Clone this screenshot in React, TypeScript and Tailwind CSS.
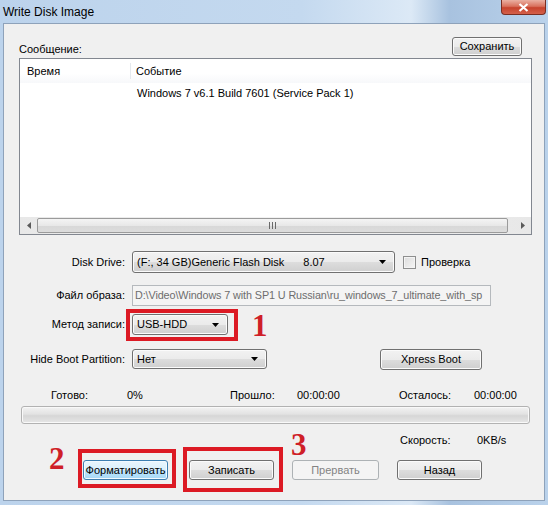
import type { ReactNode } from "react";

const face =
  "rounded-[3px] border border-[#707070] bg-[linear-gradient(#f2f2f2_0%,#ebebeb_50%,#dddddd_51%,#cfcfcf_100%)] shadow-[inset_0_0_0_1px_#fbfbfb] text-black";
const btn = `flex items-center justify-center ${face}`;

const Arrow = () => (
  <svg width="7" height="4" viewBox="0 0 7 4" className="shrink-0">
    <path d="M0 0h7L3.5 4z" fill="#000" />
  </svg>
);

const Combo = ({ children, className }: { children: ReactNode; className: string }) => (
  <div className={`flex items-center justify-between pl-[4px] pr-[8px] ${face} ${className}`}>
    <span className="flex whitespace-nowrap">{children}</span>
    <Arrow />
  </div>
);

const Label = ({ children }: { children: ReactNode }) => (
  <div className="w-[106px] shrink-0 text-right">{children}</div>
);

const RedBox = ({ className }: { className: string }) => (
  <div className={`absolute border-[4px] border-[#dc1a24] ${className}`} />
);

const Mark = ({ n, className }: { n: string; className: string }) => (
  <div
    className={`absolute font-['Liberation_Serif',serif] text-[31px] leading-none font-bold text-[#cf1f28] ${className}`}
  >
    {n}
  </div>
);

export default function App() {
  return (
    <div className="relative flex h-[505px] w-[548px] flex-col overflow-hidden bg-[linear-gradient(90deg,#bcd3ec,#c4d9ef_55%,#dce9f6_75%,#a8c2df_82%,#bad2eb_100%)] font-['Liberation_Sans',Arial,sans-serif] text-[11px] text-black">
      {/* title bar */}
      <div className="flex h-[23px] shrink-0 justify-between">
        <div className="self-center pl-[3px] pt-[1px] text-[12px] text-black">
          Write Disk Image
        </div>
        <div className="mr-[2px] flex h-[15px] w-[45px] items-center justify-center rounded-b-[4px] border border-t-0 border-[#7a2e22] bg-[linear-gradient(#eab0a2_0%,#d9715d_45%,#c7432d_55%,#d4604a_100%)]">
          <svg width="11" height="9" viewBox="0 0 11 9">
            <path d="M1.5 1l8 7M9.5 1l-8 7" stroke="#fff" strokeWidth="2.2" />
          </svg>
        </div>
      </div>

      {/* client area */}
      <div className="mx-[3px] mb-[4px] flex flex-1 flex-col border border-[#8ea2ba] bg-[#f0f0f0] pl-[15px] pr-[12px]">
        <div className="mt-[13px] flex h-[19px] items-end justify-between">
          <span className="leading-[14px]">Сообщение:</span>
          <div className={`${btn} mr-[10px] h-[19px] w-[70px]`}>Сохранить</div>
        </div>

        {/* log list */}
        <div className="mt-[2px] flex h-[177px] flex-col border border-[#828790] bg-white">
          <div className="flex h-[24px] items-center bg-[linear-gradient(#ffffff_0%,#ffffff_60%,#f7f8fa_100%)]">
            <div className="w-[111px] border-r border-[#e5e9ee] pl-[7px]">Время</div>
            <div className="pl-[5px]">Событие</div>
          </div>
          <div className="mt-[2px] flex h-[17px] items-center">
            <div className="w-[112px]" />
            <div className="pl-[5px]">Windows 7 v6.1 Build 7601 (Service Pack 1)</div>
          </div>
          <div className="flex-1" />
          <div className="flex h-[17px] items-center bg-[linear-gradient(90deg,#e8e8e8,#f2f2f2_50%,#e8e8e8)]">
            <div className="flex w-[17px] items-center justify-center">
              <svg width="4" height="7" viewBox="0 0 4 7">
                <path d="M4 0v7L0 3.5z" fill="#5a5a5a" />
              </svg>
            </div>
            <div className="flex h-[15px] flex-1 items-center justify-center rounded-[2px] border border-[#9b9b9b] bg-[linear-gradient(#f4f4f4_0%,#e8e8e8_50%,#d8d8d8_51%,#dcdcdc_100%)]">
              <svg width="7" height="7" viewBox="0 0 7 7">
                <path d="M0.5 0v7M3.5 0v7M6.5 0v7" stroke="#6a6a6a" strokeWidth="1" />
              </svg>
            </div>
            <div className="w-[6px]" />
            <div className="flex w-[17px] items-center justify-center">
              <svg width="4" height="7" viewBox="0 0 4 7">
                <path d="M0 0v7L4 3.5z" fill="#5a5a5a" />
              </svg>
            </div>
          </div>
        </div>

        {/* settings */}
        <div className="mt-[16px] flex h-[22px] items-center">
          <Label>Disk Drive:</Label>
          <Combo className="ml-[7px] h-[22px] w-[263px]">
            <span>(F:, 34 GB)Generic Flash Disk</span>
            <span className="ml-[19px]">8.07</span>
          </Combo>
          <div className="ml-[8px] h-[13px] w-[13px] border border-[#8e8f8f] bg-[linear-gradient(135deg,#dcdcdc,#f6f6f6)] shadow-[inset_0_0_0_1px_#f4f4f4]" />
          <span className="ml-[5px]">Проверка</span>
        </div>

        <div className="mt-[12px] flex h-[21px] items-center">
          <Label>Файл образа:</Label>
          <div className="ml-[7px] flex h-[21px] w-[359px] items-center overflow-hidden whitespace-nowrap border border-[#b5b9bd] bg-[#f4f4f4] pl-[2px] text-[10.8px] tracking-[-0.1px] text-[#6d6d6d]">
            D:\Video\Windows 7 with SP1 U Russian\ru_windows_7_ultimate_with_sp
          </div>
        </div>

        <div className="mt-[8px] flex h-[21px] items-center">
          <Label>Метод записи:</Label>
          <Combo className="ml-[7px] h-[21px] w-[96px]">USB-HDD</Combo>
        </div>

        <div className="mt-[14px] flex h-[21px] items-start">
          <Label>
            <span className="leading-[20px]">Hide Boot Partition:</span>
          </Label>
          <Combo className="ml-[7px] h-[20px] w-[135px]">Нет</Combo>
          <div className={`${btn} ml-[113px] h-[21px] w-[102px]`}>Xpress Boot</div>
        </div>

        <div className="mt-[17px] grid h-[14px] grid-cols-[76px_103px_67px_102px_75px_1fr] items-center pl-[32px]">
          <span>Готово:</span>
          <span>0%</span>
          <span>Прошло:</span>
          <span>00:00:00</span>
          <span>Осталось:</span>
          <span>00:00:00</span>
        </div>

        {/* progress */}
        <div className="ml-[2px] mt-[5px] h-[18px] w-[509px] rounded-[3px] border border-[#b2b2b2] bg-[linear-gradient(#f3f3f3_0%,#e2e2e2_45%,#d6d6d6_55%,#e6e6e6_100%)] shadow-[inset_0_0_0_1px_#f9f9f9]" />

        <div className="mt-[9px] flex h-[14px] items-center pl-[381px]">
          <span className="w-[77px]">Скорость:</span>
          <span>0KB/s</span>
        </div>

        <div className="mt-[13px] flex h-[20px] items-center pl-[64px]">
          <div className="flex h-[20px] w-[85px] items-center justify-center rounded-[3px] border border-[#3c7fb1] bg-[linear-gradient(#eaf6fd_0%,#d9f0fc_50%,#bee6fd_51%,#a7d9f5_100%)] shadow-[inset_0_0_0_1px_#f2faff]">
            Форматировать
          </div>
          <div className={`${btn} ml-[21px] h-[20px] w-[85px]`}>Записать</div>
          <div className="ml-[18px] flex h-[20px] w-[87px] items-center justify-center rounded-[3px] border border-[#adb2b5] bg-[#f4f4f4] text-[#838383]">
            Прервать
          </div>
          <div className={`${btn} ml-[18px] h-[20px] w-[85px]`}>Назад</div>
        </div>
      </div>

      {/* annotations */}
      <RedBox className="left-[126px] top-[309px] h-[32px] w-[112px]" />
      <RedBox className="left-[78px] top-[449px] h-[39px] w-[98px]" />
      <RedBox className="left-[183px] top-[447px] h-[45px] w-[100px]" />
      <Mark n="1" className="left-[252px] top-[310px]" />
      <Mark n="2" className="left-[49px] top-[443px]" />
      <Mark n="3" className="left-[291px] top-[429px]" />
    </div>
  );
}
